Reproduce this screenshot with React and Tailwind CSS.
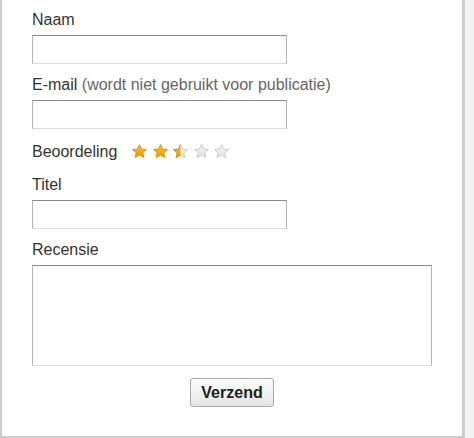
import { useState } from "react";

const font = { fontFamily: '"Liberation Sans", Arial, sans-serif' };

function Star({ fill = "full", id }) {
  // fill: full | half | empty
  const d =
    "M7.5 0.6 L9.6 5.1 L14.5 5.6 L10.8 8.8 L11.9 13.6 L7.5 11.1 L3.1 13.6 L4.2 8.8 L0.5 5.6 L5.4 5.1 Z";
  return (
    <svg width="15" height="14" viewBox="0 0 15 14" className="block">
      <defs>
        <linearGradient id={`g${id}`} x1="0" y1="0" x2="0" y2="1">
          <stop offset="0" stopColor="#ffc21a" />
          <stop offset="1" stopColor="#f09a00" />
        </linearGradient>
        <linearGradient id={`e${id}`} x1="0" y1="0" x2="0" y2="1">
          <stop offset="0" stopColor="#f6f6f6" />
          <stop offset="1" stopColor="#e2e2e2" />
        </linearGradient>
        <clipPath id={`c${id}`}>
          <rect x="0" y="0" width="7.5" height="14" />
        </clipPath>
      </defs>
      {fill === "full" ? (
        <path d={d} fill={`url(#g${id})`} stroke="#d98a00" strokeWidth="0.8" strokeLinejoin="round" />
      ) : (
        <path d={d} fill={`url(#e${id})`} stroke="#c4c4c4" strokeWidth="0.8" strokeLinejoin="round" />
      )}
      {fill === "half" && (
        <path
          d={d}
          clipPath={`url(#c${id})`}
          fill={`url(#g${id})`}
          stroke="#d98a00"
          strokeWidth="0.8"
          strokeLinejoin="round"
        />
      )}
    </svg>
  );
}

function Field({ label, extra, children }) {
  return (
    <div className="mb-[11px]">
      <label className="block h-5 leading-5 mb-[5px] text-[16px] text-[#333]">
        {label}
        {extra && <span className="text-[#666]"> {extra}</span>}
      </label>
      {children}
    </div>
  );
}

const inputCls =
  "block w-[255px] h-[29px] px-1 bg-white border border-t-[#8a8a8a] border-l-[#b5b5b5] border-r-[#b5b5b5] border-b-[#dcdcdc] outline-none text-[14px]";

export default function App() {
  const [rating] = useState(2.5);
  const stars = [1, 2, 3, 4, 5].map((n) =>
    rating >= n ? "full" : rating >= n - 0.5 ? "half" : "empty"
  );

  return (
    <div className="w-[474px] h-[438px] bg-[#f2f2f2] flex" style={font}>
      <div className="w-[465px] h-[438px] bg-white border-l-2 border-r-[3px] border-b-2 border-[#cccccc] pt-[10px] pl-[30px]">
        <form className="w-[400px]" onSubmit={(e) => e.preventDefault()}>
          <Field label="Naam">
            <input type="text" className={inputCls} />
          </Field>
          <Field label="E-mail" extra="(wordt niet gebruikt voor publicatie)">
            <input type="text" className={inputCls} />
          </Field>
          <div className="flex items-center h-6 mb-[11px]">
            <span className="text-[16px] text-[#333] leading-5 mr-[15px]">Beoordeling</span>
            <div className="flex gap-[5.5px] -mt-[3px]">
              {stars.map((s, i) => (
                <Star key={i} id={i} fill={s} />
              ))}
            </div>
          </div>
          <Field label="Titel">
            <input type="text" className={inputCls} />
          </Field>
          <div className="mb-3">
            <label className="block h-5 leading-5 mb-[5px] text-[16px] text-[#333]">Recensie</label>
            <textarea className="block w-[400px] h-[101px] resize-none bg-white border border-t-[#8a8a8a] border-l-[#b5b5b5] border-r-[#b5b5b5] border-b-[#dcdcdc] outline-none" />
          </div>
          <div className="flex justify-center">
            <button
              type="submit"
              className="w-[84px] h-[29px] rounded-[3px] border border-[#acacac] bg-gradient-to-b from-[#fdfdfd] to-[#e4e4e4] text-[16px] font-bold text-[#222]"
            >
              Verzend
            </button>
          </div>
        </form>
      </div>
    </div>
  );
}
